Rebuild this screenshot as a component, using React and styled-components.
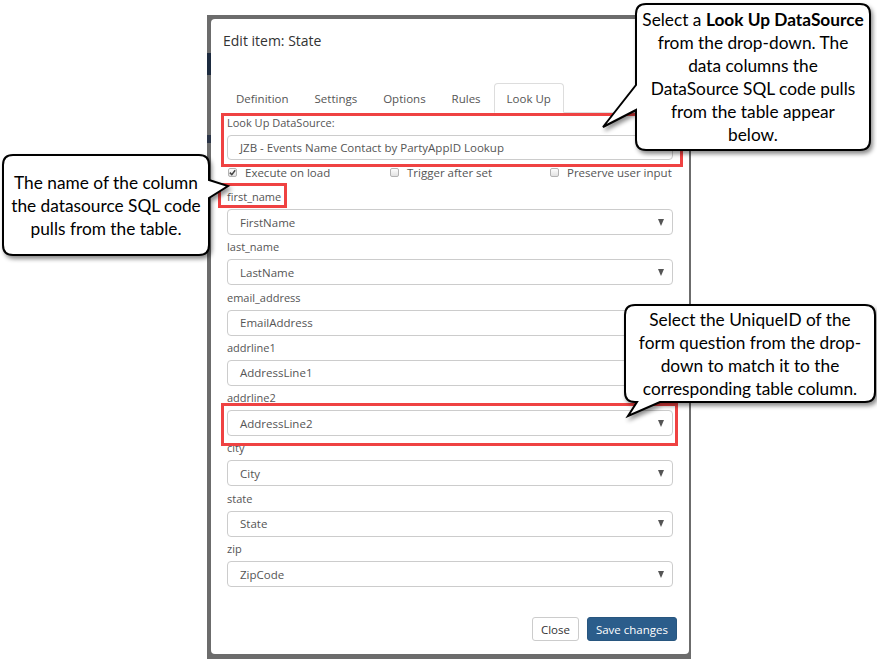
import React from "react";
import styled, { createGlobalStyle } from "styled-components";

const Global = createGlobalStyle`
  html, body { margin: 0; padding: 0; background: #fff; }
  body { font-family: "Open Sans", "Liberation Sans", sans-serif; }
  * { box-sizing: border-box; }
`;

const Page = styled.div`
  position: relative;
  width: 877px;
  height: 659px;
  overflow: hidden;
  background: #fff;
  padding: 15px 0 0 207px;
`;

const Backdrop = styled.div`
  width: 484px;
  height: 644px;
  padding: 4px 2px 5px 4px;
  background:
    linear-gradient(to bottom,
      transparent 0, transparent 38px,
      #1d2b3f 38px, #1d2b3f 60px,
      transparent 60px, transparent 120px,
      #2a3446 120px, #2a3446 128px,
      transparent 128px);
  background-color: #6c6c6c;
`;

const Modal = styled.div`
  height: 100%;
  background: #fff;
  border-radius: 4px;
  display: flex;
  flex-direction: column;
`;

const Header = styled.div`
  padding: 12px 12px 0;
`;

const Title = styled.h4`
  margin: 0;
  font-size: 14px;
  line-height: 20px;
  font-weight: 400;
  color: #333;
`;

const TabList = styled.div`
  display: flex;
  margin: 32px 12px 0;
  border-bottom: 1px solid #ddd;
`;

const Tab = styled.div`
  height: 30px;
  padding: 1px 12px 0;
  line-height: 28px;
  font-size: 11.5px;
  color: #555;
  margin-bottom: -1px;
  border: 1px solid ${(p) => (p.$active ? "#ddd" : "transparent")};
  border-bottom-color: transparent;
  border-radius: 4px 4px 0 0;
  background: #fff;
`;

const Body = styled.div`
  padding: 0 16px;
  display: flex;
  flex-direction: column;
`;

const Label = styled.div`
  font-size: 11px;
  line-height: 16px;
  color: #555;
  margin-top: ${(p) => p.$mt || 0}px;
`;

const TextInput = styled.div`
  margin-top: 4px;
  height: 25px;
  border: 1px solid #ccc;
  border-radius: 4px;
  padding: 0 12px;
  display: flex;
  align-items: center;
  font-size: 11.5px;
  color: #555;
`;

const CheckRow = styled.div`
  display: grid;
  grid-template-columns: 162px 160px 1fr;
  margin-top: 4px;
  padding-left: 1px;
  height: 16px;
`;

const CheckItem = styled.div`
  display: flex;
  align-items: center;
  gap: 8px;
  font-size: 11.5px;
  color: #555;
  white-space: nowrap;
`;

const Box = styled.span`
  width: 9px;
  height: 9px;
  border: 1px solid #b3b3b3;
  border-radius: 2px;
  background: linear-gradient(#fdfdfd, #e2e2e2);
  display: inline-flex;
  align-items: center;
  justify-content: center;
`;

const Fields = styled.div`
  display: flex;
  flex-direction: column;
  gap: 4.3px;
  margin-top: 9px;
`;

const Field = styled.div`
  display: flex;
  flex-direction: column;
`;

const SelectBox = styled.div`
  margin-top: 4px;
  height: 26px;
  border: 1px solid #ccc;
  border-radius: 4px;
  padding: 0 8px 0 12px;
  display: flex;
  align-items: center;
  justify-content: space-between;
  font-size: 11.5px;
  color: #555;
`;

const Caret = styled.span`
  width: 0;
  height: 0;
  border-left: 3.5px solid transparent;
  border-right: 3.5px solid transparent;
  border-top: 7px solid #555;
`;

const Footer = styled.div`
  margin-top: auto;
  padding: 0 12px 13px;
  display: flex;
  justify-content: flex-end;
  gap: 8px;
`;

const Button = styled.div`
  height: 24px;
  padding: 0 8px;
  display: flex;
  align-items: center;
  font-size: 11.5px;
  border-radius: 3px;
  border: 1px solid ${(p) => (p.$primary ? "#28567f" : "#ccc")};
  background: ${(p) => (p.$primary ? "#2b5d8b" : "#fff")};
  color: ${(p) => (p.$primary ? "#fff" : "#333")};
`;

const Highlight = styled.div`
  position: absolute;
  border: 3px solid #ef4242;
  pointer-events: none;
`;

const CalloutWrap = styled.div`
  position: absolute;
  display: flex;
  align-items: center;
  justify-content: center;
`;

const CalloutShape = styled.svg`
  position: absolute;
  left: 0;
  top: 0;
  overflow: visible;
  filter: drop-shadow(2px 3px 2px rgba(0, 0, 0, 0.45));
`;

const CalloutText = styled.div`
  position: relative;
  font-family: Lato, "Open Sans", sans-serif;
  font-size: 17.3px;
  line-height: 23px;
  color: #000;
  text-align: center;
  white-space: nowrap;
  b { font-weight: 700; }
`;

function Callout({ x, y, w, h, d, children }) {
  return (
    <CalloutWrap style={{ left: x, top: y, width: w, height: h }}>
      <CalloutShape width={w} height={h}>
        <path d={d} fill="#fff" stroke="#000" strokeWidth="2" strokeLinejoin="miter" />
      </CalloutShape>
      <CalloutText>{children}</CalloutText>
    </CalloutWrap>
  );
}

const r = 10;
const rect = (w, h, top, right, bottom, left) =>
  `M ${r} 0 ${top || ""} H ${w - r} Q ${w} 0 ${w} ${r} ${right || ""} V ${h - r} Q ${w} ${h} ${w - r} ${h} ${bottom || ""} H ${r} Q 0 ${h} 0 ${h - r} ${left || ""} V ${r} Q 0 0 ${r} 0 Z`;

const fields = [
  ["first_name", "FirstName"],
  ["last_name", "LastName"],
  ["email_address", "EmailAddress"],
  ["addrline1", "AddressLine1"],
  ["addrline2", "AddressLine2"],
  ["city", "City"],
  ["state", "State"],
  ["zip", "ZipCode"],
];

const tabs = ["Definition", "Settings", "Options", "Rules", "Look Up"];

function Check({ checked, label }) {
  return (
    <CheckItem>
      <Box>
        {checked && (
          <svg width="7" height="7" viewBox="0 0 7 7">
            <path d="M0.8 3.6 L2.8 5.6 L6.2 1.2" fill="none" stroke="#444" strokeWidth="1.5" />
          </svg>
        )}
      </Box>
      {label}
    </CheckItem>
  );
}

export default function App() {
  return (
    <Page>
      <Global />
      <Backdrop>
        <Modal>
          <Header>
            <Title>Edit item: State</Title>
          </Header>
          <TabList>
            {tabs.map((t) => (
              <Tab key={t} $active={t === "Look Up"}>
                {t}
              </Tab>
            ))}
          </TabList>
          <Body>
            <Label $mt={2}>Look Up DataSource:</Label>
            <TextInput>JZB - Events Name Contact by PartyAppID Lookup</TextInput>
            <CheckRow>
              <Check checked label="Execute on load" />
              <Check label="Trigger after set" />
              <Check label="Preserve user input" />
            </CheckRow>
            <Fields>
              {fields.map(([l, v]) => (
                <Field key={l}>
                  <Label>{l}</Label>
                  <SelectBox>
                    {v}
                    <Caret />
                  </SelectBox>
                </Field>
              ))}
            </Fields>
          </Body>
          <Footer>
            <Button>Close</Button>
            <Button $primary>Save changes</Button>
          </Footer>
        </Modal>
      </Backdrop>

      <Highlight style={{ left: 221, top: 113, width: 462, height: 54 }} />
      <Highlight style={{ left: 218, top: 183, width: 69, height: 25 }} />
      <Highlight style={{ left: 221, top: 403, width: 457, height: 43 }} />

      <Callout
        x={636}
        y={4}
        w={234}
        h={146}
        d={rect(234, 146, "", "", "", "V 106 L -33 123 L 0 81")}
      >
        Select a <b>Look Up DataSource</b>
        <br />
        from the drop-down. The
        <br />
        data columns the
        <br />
        DataSource SQL code pulls
        <br />
        from the table appear
        <br />
        below.
      </Callout>

      <Callout
        x={3}
        y={155}
        w={206}
        h={100}
        d={rect(206, 100, "", "V 25 L 225 31 L 206 43", "", "")}
      >
        The name of the column
        <br />
        the datasource SQL code
        <br />
        pulls from the table.
      </Callout>

      <Callout
        x={625}
        y={305}
        w={250}
        h={97}
        d={rect(250, 97, "", "", "H 35 L 3 111 L 12 97", "")}
      >
        Select the UniqueID of the
        <br />
        form question from the drop-
        <br />
        down to match it to the
        <br />
        corresponding table column.
      </Callout>
    </Page>
  );
}
